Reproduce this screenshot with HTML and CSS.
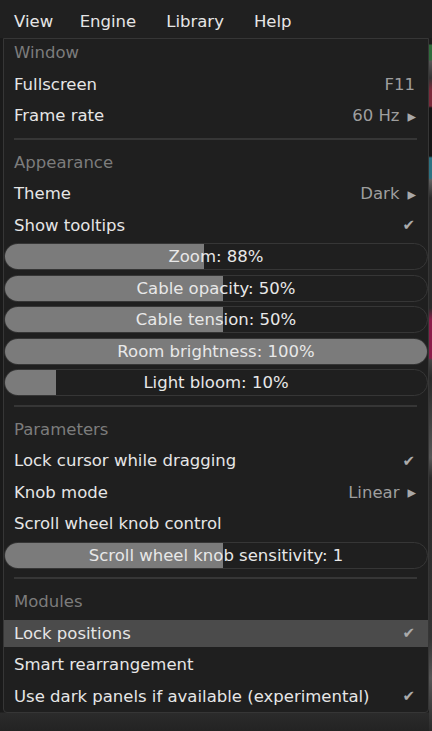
FILE: index.html
```html
<!DOCTYPE html>
<html lang="en">
<head>
    <meta charset="UTF-8">
    <title>View menu</title>
    <link rel="stylesheet" href="styles.css">
</head>
<body>
<!-- 顶部菜单栏 -->
<div class="menubar">
    <span class="bar-item first">View</span>
    <span class="bar-item">Engine</span>
    <span class="bar-item">Library</span>
    <span class="bar-item">Help</span>
</div>

<div class="stage">
    <!-- 下拉菜单 -->
    <div class="menu">
        <div class="entry label">Window</div>
        <div class="entry item">Fullscreen<span class="right">F11</span></div>
        <div class="entry item">Frame rate<span class="right">60 Hz<i class="arrow">&#9656;</i></span></div>
        <div class="sep"></div>

        <div class="entry label">Appearance</div>
        <div class="entry item">Theme<span class="right">Dark<i class="arrow">&#9656;</i></span></div>
        <div class="entry item">Show tooltips<span class="check">&#10004;</span></div>
        <div class="entry slider"><div class="fill" style="width: 199px"></div><span class="slider-text">Zoom: 88%</span></div>
        <div class="entry slider"><div class="fill" style="width: 218px"></div><span class="slider-text">Cable opacity: 50%</span></div>
        <div class="entry slider"><div class="fill" style="width: 218px"></div><span class="slider-text">Cable tension: 50%</span></div>
        <div class="entry slider"><div class="fill" style="width: 100%"></div><span class="slider-text">Room brightness: 100%</span></div>
        <div class="entry slider"><div class="fill" style="width: 51px"></div><span class="slider-text">Light bloom: 10%</span></div>
        <div class="sep"></div>

        <div class="entry label">Parameters</div>
        <div class="entry item">Lock cursor while dragging<span class="check">&#10004;</span></div>
        <div class="entry item">Knob mode<span class="right">Linear<i class="arrow">&#9656;</i></span></div>
        <div class="entry item">Scroll wheel knob control</div>
        <div class="entry slider"><div class="fill" style="width: 218px"></div><span class="slider-text">Scroll wheel knob sensitivity: 1</span></div>
        <div class="sep"></div>

        <div class="entry label">Modules</div>
        <div class="entry item hover">Lock positions<span class="check">&#10004;</span></div>
        <div class="entry item">Smart rearrangement</div>
        <div class="entry item">Use dark panels if available (experimental)<span class="check">&#10004;</span></div>
    </div>
    <!-- 右侧露出的机架 -->
    <div class="rack"></div>
</div>
</body>
</html>
```

FILE: styles.css
```css
* {
    margin: 0;
    padding: 0;
    box-sizing: border-box;
}

body {
    width: 432px;
    height: 731px;
    overflow: hidden;
    background: linear-gradient(#1a1a1a 0, #1a1a1a 712px, #2b2b2b 713px, #232323 731px);
    font-family: "DejaVu Sans", "Liberation Sans", sans-serif;
    font-size: 16.5px;
    color: #e6e6e6;
}

/* 菜单栏 */
.menubar {
    height: 38px;
    display: flex;
    align-items: center;
    gap: 30px;
    padding: 5px 0 0 14px;
    background-color: #202020;
}

.bar-item {
    line-height: 20px;
}

.bar-item.first {
    margin-right: -3.5px;
}

.stage {
    display: flex;
    align-items: flex-start;
}

/* 下拉菜单 */
.menu {
    width: 426px;
    margin-left: 3px;
    display: flex;
    flex-direction: column;
    gap: 4.5px;
    padding-bottom: 2px;
    background-color: #1f1f1f;
    border: 1px solid #363636;
    border-radius: 0 0 4px 4px;
}

.entry {
    height: 27px;
    display: flex;
    align-items: center;
    padding: 0 13px 0 10px;
    white-space: nowrap;
}

.label {
    color: #7c7c7c;
}

.item .right {
    margin-left: auto;
    color: #9e9e9e;
    display: flex;
    align-items: center;
}

.arrow {
    font-style: normal;
    font-size: 17px;
    margin-left: 8px;
    margin-right: -1px;
    color: #a8a8a8;
}

.check {
    margin-left: auto;
    font-size: 15px;
    color: #ababab;
}

.hover {
    background-color: #4b4b4b;
}

/* 分隔线 */
.sep {
    height: 10.5px;
    margin: 0 11px 0 10px;
    display: flex;
    align-items: center;
}

.sep::before {
    content: "";
    flex: 1;
    height: 2px;
    background-color: #363636;
}

/* 滑块 */
.slider {
    position: relative;
    padding: 0;
    justify-content: center;
    border: 1px solid #363636;
    border-radius: 14px;
    overflow: hidden;
}

.fill {
    position: absolute;
    left: 0;
    top: 0;
    bottom: 0;
    background-color: #7b7b7b;
}

.slider-text {
    position: relative;
    color: #e8e8e8;
}

/* 右边露出一点的机架 */
.rack {
    width: 3px;
    height: 693px;
    background: linear-gradient(#1c1c1c 0, #1c1c1c 6px, #2f6b3c 7px, #2f6b3c 22px,
        #555 23px, #333 40px, #7a2a3a 52px, #7a2a3a 68px, #151515 70px, #151515 118px,
        #2c7282 120px, #2c7282 140px, #606060 142px, #2a2a2a 160px, #2a2a2a 270px,
        #8a1e4a 282px, #8a1e4a 320px, #444 322px, #2a2a2a 340px, #555 420px,
        #2a2a2a 440px, #333 600px, #555 640px, #2a2a2a 693px);
}
```
